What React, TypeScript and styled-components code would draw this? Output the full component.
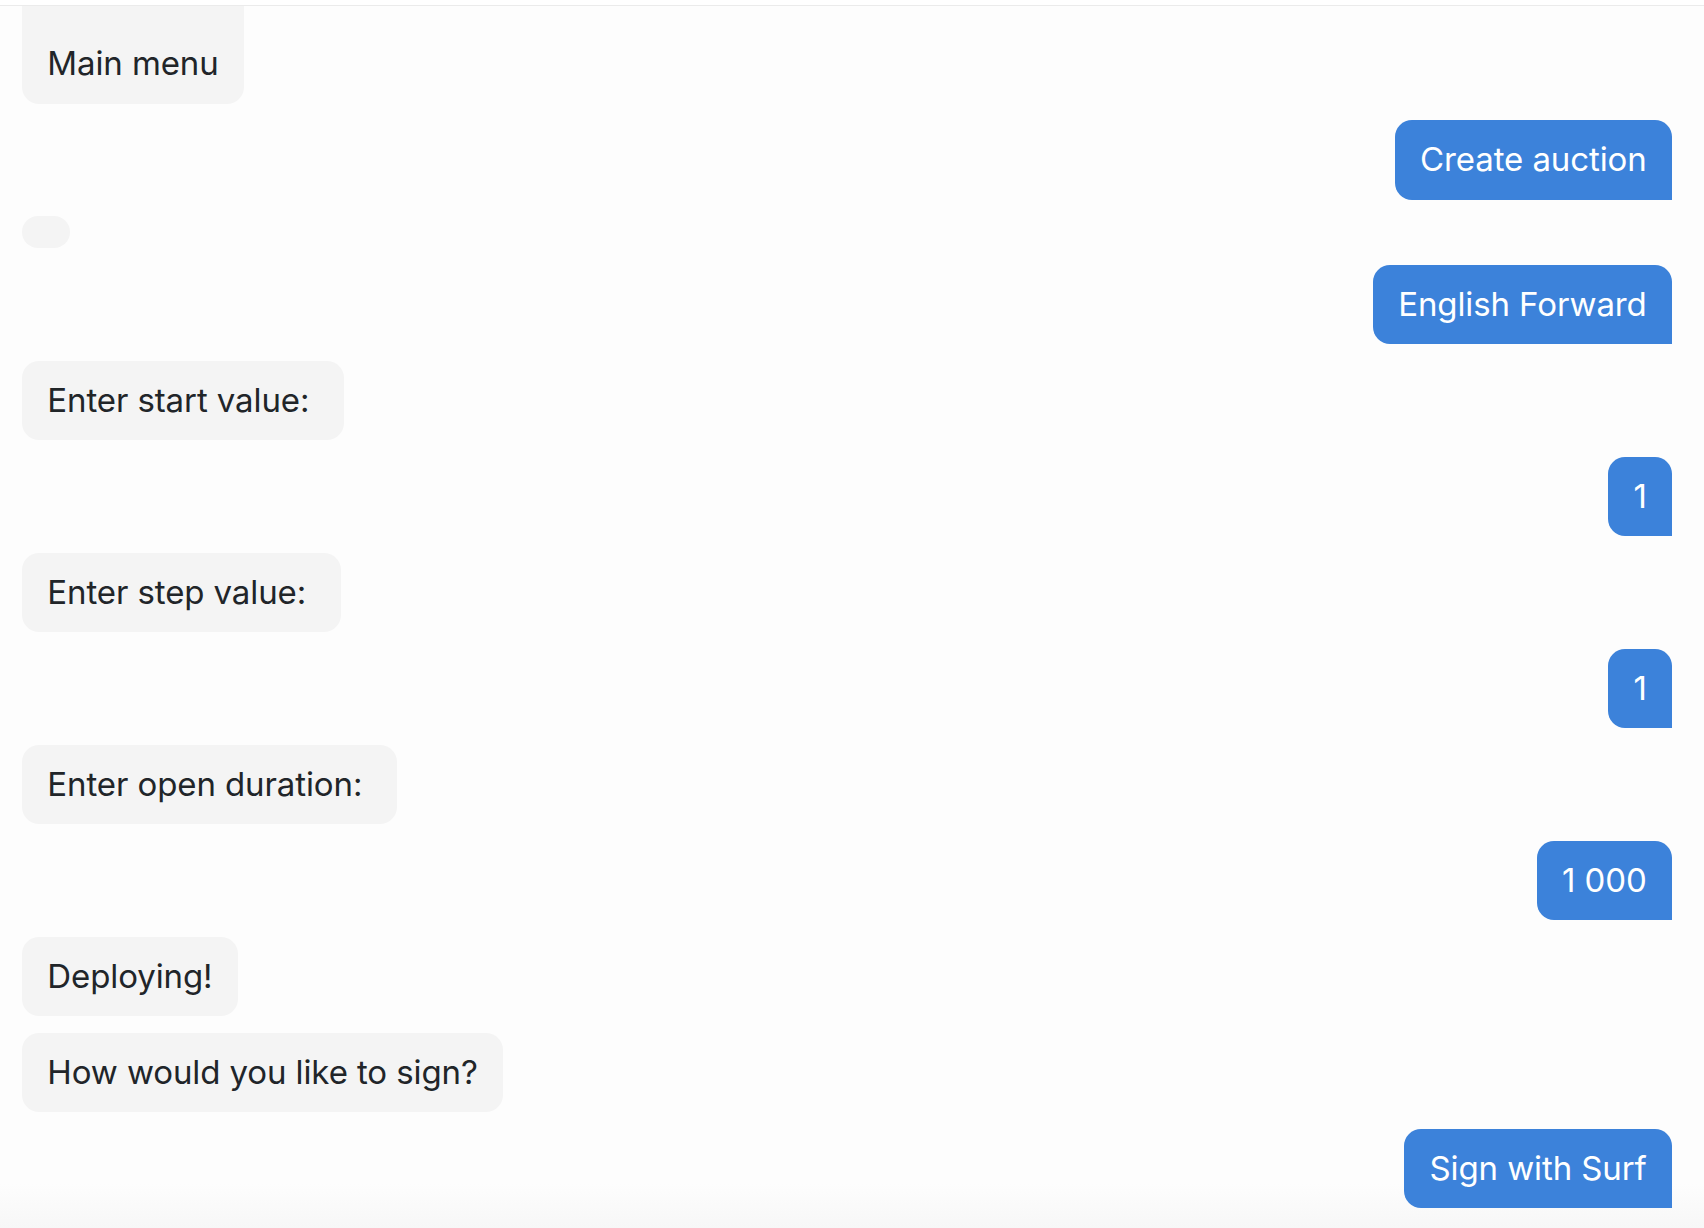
import React from "react";
import styled, { createGlobalStyle, css } from "styled-components";

const GlobalStyle = createGlobalStyle`
  html, body {
    margin: 0;
    padding: 0;
    height: 100%;
    background: #ffffff;
  }
  #root {
    height: 100%;
  }
  * {
    box-sizing: border-box;
  }
`;

const Page = styled.div`
  display: flex;
  flex-direction: column;
  height: 100vh;
  font-family: Inter, "Noto Sans", "Liberation Sans", sans-serif;
`;

const TopStrip = styled.div`
  flex: 0 0 6px;
  background: #ffffff;
  border-bottom: 1.5px solid #ebebeb;
`;

const Chat = styled.div`
  flex: 1 1 auto;
  min-height: 0;
  overflow: hidden;
  display: flex;
  flex-direction: column;
  justify-content: flex-end;
  gap: 16.5px;
  padding: 0 32px 20px 22px;
  background: linear-gradient(
    to bottom,
    #fdfdfd calc(100% - 44px),
    #f7f7f7 100%
  );
`;

type Side = "bot" | "user";

const Row = styled.div<{ $side: Side }>`
  display: flex;
  flex-shrink: 0;
  justify-content: ${(p) => (p.$side === "user" ? "flex-end" : "flex-start")};
`;

const Bubble = styled.div<{ $side: Side; $empty?: boolean }>`
  padding: 20px 25.3px;
  font-size: 33px;
  line-height: 39.5px;
  letter-spacing: -0.1px;
  white-space: pre;
  border-radius: 17px;
  ${(p) =>
    p.$side === "user"
      ? css`
          background: #3c82da;
          color: #ffffff;
          border-bottom-right-radius: 0;
        `
      : css`
          background: #f4f4f4;
          color: #212529;
        `}
  ${(p) =>
    p.$empty &&
    css`
      padding: 16px 24px;
      border-radius: 16px;
    `}
`;

type Msg = { side: Side; text: string };

const messages: Msg[] = [
  { side: "bot", text: "\nMain menu" },
  { side: "user", text: "Create auction" },
  { side: "bot", text: "" },
  { side: "user", text: "English Forward" },
  { side: "bot", text: "Enter start value: " },
  { side: "user", text: "1" },
  { side: "bot", text: "Enter step value: " },
  { side: "user", text: "1" },
  { side: "bot", text: "Enter open duration: " },
  { side: "user", text: "1 000" },
  { side: "bot", text: "Deploying!" },
  { side: "bot", text: "How would you like to sign?" },
  { side: "user", text: "Sign with Surf" },
];

export default function App() {
  return (
    <Page>
      <GlobalStyle />
      <TopStrip />
      <Chat>
        {messages.map((m, i) => (
          <Row key={i} $side={m.side}>
            <Bubble $side={m.side} $empty={m.text === ""}>
              {m.text}
            </Bubble>
          </Row>
        ))}
      </Chat>
    </Page>
  );
}
